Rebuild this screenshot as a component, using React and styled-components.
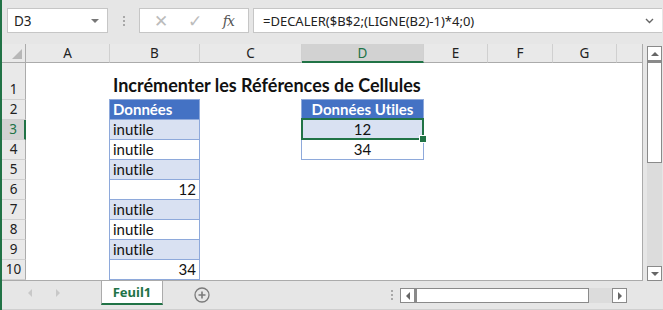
import React from 'react';
import styled, { createGlobalStyle, css } from 'styled-components';

const GREEN = '#217346';
const BLUE = '#4472c4';
const BAND = '#d9e1f2';
const LINE = '#8ea9db';

const Global = createGlobalStyle`
  html, body { margin: 0; padding: 0; background: #e6e6e6; }
  * { box-sizing: border-box; }
`;

const Window = styled.div`
  width: 663px;
  height: 310px;
  overflow: hidden;
  background: #e6e6e6;
  border-left: 2px solid ${GREEN};
  display: flex;
  flex-direction: column;
  font-family: "Noto Sans", "Open Sans", sans-serif;
`;

const FormulaBar = styled.div`
  height: 44px;
  flex: none;
  display: flex;
  align-items: flex-start;
  padding: 8px 1px 0 5px;
`;

const Field = styled.div`
  height: 25px;
  background: #fff;
  border: 1px solid #c6c6c6;
  display: flex;
  align-items: center;
  color: #222;
  font-size: 13.5px;
`;

const NameBox = styled(Field)`
  width: 101px;
  padding: 0 6px;
  justify-content: space-between;
`;

const Caret = styled.span`
  width: 0;
  height: 0;
  border-left: 4px solid transparent;
  border-right: 4px solid transparent;
  border-top: 4px solid #777;
  margin-right: 2px;
`;

const Grip = styled.div`
  width: 31px;
  height: 25px;
  display: flex;
  flex-direction: column;
  align-items: center;
  justify-content: center;
  gap: 2px;
  span { width: 2px; height: 2px; background: #a8a8a8; }
`;

const FxBox = styled(Field)`
  width: 110px;
  justify-content: space-around;
  padding: 0 4px;
  color: #bcbcbc;
  font-size: 17px;
`;

const Fx = styled.span`
  font-family: "DejaVu Serif", "Liberation Serif", serif;
  font-style: italic;
  font-size: 14px;
  color: #555;
  letter-spacing: -1px;
`;

const FormulaInput = styled(Field)`
  flex: 1;
  margin-left: 4px;
  padding: 0 8px 0 9px;
  justify-content: space-between;
  border-right: none;
  font-size: 13px;
  span { white-space: nowrap; }
`;

const Chevron = styled.svg`
  width: 9px;
  height: 6px;
`;

const Main = styled.div`
  flex: none;
  height: 237px;
  display: flex;
`;

const Sheet = styled.div`
  width: 641px;
  height: 237px;
  display: grid;
  grid-template-columns: 24px 84px 90px 102px 122px 64px 65px 64px 26px;
  grid-template-rows: 19px 37px repeat(9, 20px);
  background: #fff;
  border-right: 1px solid #ababab;
  border-bottom: 1px solid #ababab;
  overflow: hidden;
`;

const headerBase = css`
  background: #e9e9e9;
  display: flex;
  align-items: center;
  justify-content: center;
  font-family: "Noto Sans", sans-serif;
  font-size: 13.5px;
  color: #222;
`;

const Corner = styled.div`
  ${headerBase};
  position: relative;
  border-right: 1px solid #ababab;
  border-bottom: 1px solid #ababab;
  &::after {
    content: '';
    position: absolute;
    right: 3px;
    bottom: 3px;
    border-left: 10px solid transparent;
    border-bottom: 10px solid #b7b7b7;
  }
`;

const ColHead = styled.div`
  ${headerBase};
  border-right: 1px solid #d0d0d0;
  border-bottom: 1px solid #ababab;
  ${p => p.$active && css`
    background: #d2d2d2;
    color: ${GREEN};
    border-bottom: 2px solid ${GREEN};
  `}
`;

const RowHead = styled.div`
  ${headerBase};
  align-items: flex-end;
  padding-bottom: 1px;
  border-right: 1px solid #ababab;
  border-bottom: 1px solid #d0d0d0;
  ${p => p.$active && css`
    background: #d2d2d2;
    color: ${GREEN};
    border-right: 2px solid ${GREEN};
  `}
`;

const Cell = styled.div`
  position: relative;
  display: flex;
  align-items: flex-end;
  padding: 0 3px 1px 3px;
  font-family: Lato, "Open Sans", sans-serif;
  font-variant-ligatures: none;
  font-size: 15px;
  color: #111;
  white-space: nowrap;
  justify-content: ${p => p.$align === 'center' ? 'center' : p.$align === 'right' ? 'flex-end' : 'flex-start'};
  ${p => p.$kind === 'title' && css`
    font-weight: 700;
    font-size: 18px;
    overflow: visible;
    padding-bottom: 4px;
    z-index: 1;
  `}
  ${p => p.$kind === 'head' && css`
    background: ${BLUE};
    color: #fff;
    font-weight: 700;
  `}
  ${p => p.$kind === 'data' && css`
    background: ${p.$band ? BAND : '#fff'};
  `}
  ${p => (p.$kind === 'head' || p.$kind === 'data') && css`
    border-left: 1px solid ${LINE};
    border-right: 1px solid ${LINE};
    border-bottom: 1px solid ${LINE};
    margin-left: -1px;
  `}
  ${p => p.$kind === 'head' && css`
    border-top: 1px solid ${LINE};
    margin-top: -1px;
  `}
  ${p => p.$selected && css`
    &::after {
      content: '';
      position: absolute;
      left: -1px;
      top: -2px;
      right: -1px;
      bottom: -1px;
      border: 2px solid ${GREEN};
    }
    &::before {
      content: '';
      position: absolute;
      right: -4px;
      bottom: -4px;
      width: 6px;
      height: 6px;
      background: ${GREEN};
      border: 1px solid #fff;
      z-index: 2;
    }
  `}
`;

const VScroll = styled.div`
  width: 20px;
  display: flex;
  flex-direction: column;
  padding: 2px 1px 0 4px;
`;

const ScrollBtn = styled.div`
  width: 15px;
  height: 15px;
  flex: none;
  background: #fff;
  border: 1px solid #8a8a8a;
  display: flex;
  align-items: center;
  justify-content: center;
`;

const Tri = styled.span`
  width: 0;
  height: 0;
  ${p => p.$dir === 'up' && css`
    border-left: 4px solid transparent;
    border-right: 4px solid transparent;
    border-bottom: 4px solid #666;
  `}
  ${p => p.$dir === 'down' && css`
    border-left: 4px solid transparent;
    border-right: 4px solid transparent;
    border-top: 4px solid #666;
  `}
  ${p => p.$dir === 'left' && css`
    border-top: 4px solid transparent;
    border-bottom: 4px solid transparent;
    border-right: 4px solid ${p.$light ? '#c8c8c8' : '#666'};
  `}
  ${p => p.$dir === 'right' && css`
    border-top: 4px solid transparent;
    border-bottom: 4px solid transparent;
    border-left: 4px solid ${p.$light ? '#c8c8c8' : '#666'};
  `}
`;

const VThumb = styled.div`
  height: 102px;
  flex: none;
  background: #fff;
  border: 1px solid #8a8a8a;
  border-top-width: 2px;
`;

const Track = styled.div`
  flex: 1;
  background: #dcdcdc;
`;

const TabBar = styled.div`
  flex: 1;
  display: flex;
  align-items: flex-start;
  border-bottom: 1px solid #cfcfcf;
`;

const TabNav = styled.div`
  width: 99px;
  height: 24px;
  display: flex;
  align-items: center;
  gap: 24px;
  padding-left: 26px;
`;

const Tab = styled.div`
  width: 62px;
  height: 24px;
  background: #fff;
  border-left: 1px solid #ababab;
  border-right: 1px solid #ababab;
  border-bottom: 2px solid ${GREEN};
  display: flex;
  align-items: center;
  justify-content: center;
  color: ${GREEN};
  font-family: "Noto Sans", sans-serif;
  font-weight: 700;
  font-size: 13px;
`;

const AddSheet = styled.svg`
  width: 16px;
  height: 16px;
  margin: 6px 0 0 31px;
`;

const HGrip = styled(Grip)`
  width: 16px;
  margin-left: 174px;
  margin-top: 4px;
  height: 20px;
`;

const HScroll = styled.div`
  width: 227px;
  height: 15px;
  margin-top: 7px;
  display: flex;
`;

const HThumb = styled.div`
  width: 174px;
  background: #fff;
  border: 1px solid #8a8a8a;
  border-left-width: 2px;
`;

const cols = ['A', 'B', 'C', 'D', 'E', 'F', 'G', ''];

const rows = [
  { n: 1, cells: { B: { text: 'Incrémenter les Références de Cellules', kind: 'title' } } },
  { n: 2, cells: { B: { text: 'Données', kind: 'head' }, D: { text: 'Données Utiles', kind: 'head', align: 'center' } } },
  { n: 3, cells: { B: { text: 'inutile', kind: 'data', band: true }, D: { text: '12', kind: 'data', band: true, align: 'center', selected: true } } },
  { n: 4, cells: { B: { text: 'inutile', kind: 'data' }, D: { text: '34', kind: 'data', align: 'center' } } },
  { n: 5, cells: { B: { text: 'inutile', kind: 'data', band: true } } },
  { n: 6, cells: { B: { text: '12', kind: 'data', align: 'right' } } },
  { n: 7, cells: { B: { text: 'inutile', kind: 'data', band: true } } },
  { n: 8, cells: { B: { text: 'inutile', kind: 'data' } } },
  { n: 9, cells: { B: { text: 'inutile', kind: 'data', band: true } } },
  { n: 10, cells: { B: { text: '34', kind: 'data', align: 'right' } } },
];

export default function App() {
  return (
    <Window>
      <Global />
      <FormulaBar>
        <NameBox>
          <span>D3</span>
          <Caret />
        </NameBox>
        <Grip><span /><span /><span /></Grip>
        <FxBox>
          <span>✕</span>
          <span>✓</span>
          <Fx>fx</Fx>
        </FxBox>
        <FormulaInput>
          <span>=DECALER($B$2;(LIGNE(B2)-1)*4;0)</span>
          <Chevron viewBox="0 0 9 6">
            <path d="M1 1 L4.5 4.5 L8 1" fill="none" stroke="#666" strokeWidth="1.4" />
          </Chevron>
        </FormulaInput>
      </FormulaBar>

      <Main>
        <Sheet>
          <Corner />
          {cols.map((c, i) => (
            <ColHead key={i} $active={c === 'D'}>{c}</ColHead>
          ))}
          {rows.map(r => (
            <React.Fragment key={r.n}>
              <RowHead $active={r.n === 3}>{r.n}</RowHead>
              {cols.map((c, i) => {
                const cell = r.cells[c];
                if (!cell) return <Cell key={i} />;
                return (
                  <Cell
                    key={i}
                    $kind={cell.kind}
                    $band={cell.band}
                    $align={cell.align}
                    $selected={cell.selected}
                  >
                    {cell.text}
                  </Cell>
                );
              })}
            </React.Fragment>
          ))}
        </Sheet>
        <VScroll>
          <ScrollBtn><Tri $dir="up" /></ScrollBtn>
          <VThumb />
          <Track />
          <ScrollBtn><Tri $dir="down" /></ScrollBtn>
        </VScroll>
      </Main>

      <TabBar>
        <TabNav>
          <Tri $dir="left" $light />
          <Tri $dir="right" $light />
        </TabNav>
        <Tab>Feuil1</Tab>
        <AddSheet viewBox="0 0 16 16">
          <circle cx="8" cy="8" r="7" fill="none" stroke="#7a7a7a" strokeWidth="1.3" />
          <path d="M8 4.5 V11.5 M4.5 8 H11.5" stroke="#7a7a7a" strokeWidth="1.6" />
        </AddSheet>
        <HGrip><span /><span /><span /></HGrip>
        <HScroll>
          <ScrollBtn><Tri $dir="left" /></ScrollBtn>
          <HThumb />
          <Track />
          <ScrollBtn><Tri $dir="right" /></ScrollBtn>
        </HScroll>
      </TabBar>
    </Window>
  );
}
